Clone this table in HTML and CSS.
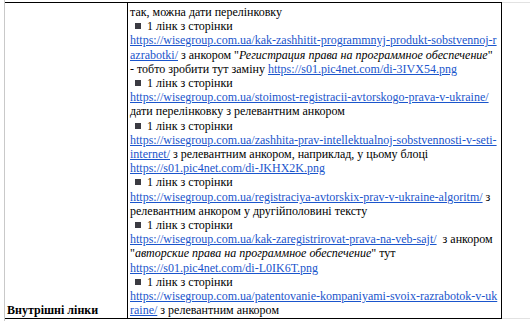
FILE: index.html
```html
<!DOCTYPE html>
<html lang="uk">
<head>
<meta charset="utf-8">
<link rel="stylesheet" href="styles.css">
</head>
<body>
<div class="page">
  <table class="doc-table">
    <tr>
      <td class="label-cell"><b>Внутрішні лінки</b></td>
      <td class="content-cell">так, можна дати перелінковку<br>
<span class="sq"></span>1 лінк з сторінки<br>
<a href="#">https://wisegroup.com.ua/kak-zashhitit-programmnyj-produkt-sobstvennoj-r</a><br>
<a href="#">azrabotki/</a> з анкором "<i>Регистрация права на программное обеспечение</i>"<br>
- тобто зробити тут заміну <a href="#">https://s01.pic4net.com/di-3IVX54.png</a><br>
<span class="sq"></span>1 лінк з сторінки<br>
<a href="#">https://wisegroup.com.ua/stoimost-registracii-avtorskogo-prava-v-ukraine/</a><br>
дати перелінковку з релевантним анкором<br>
<span class="sq"></span>1 лінк з сторінки<br>
<a href="#">https://wisegroup.com.ua/zashhita-prav-intellektualnoj-sobstvennosti-v-seti-</a><br>
<a href="#">internet/</a> з релевантним анкором, наприклад, у цьому блоці<br>
<a href="#">https://s01.pic4net.com/di-JKHX2K.png</a><br>
<span class="sq"></span>1 лінк з сторінки<br>
<a href="#">https://wisegroup.com.ua/registraciya-avtorskix-prav-v-ukraine-algoritm/</a> з<br>
релевантним анкором у другійполовині тексту<br>
<span class="sq"></span>1 лінк з сторінки<br>
<a href="#">https://wisegroup.com.ua/kak-zaregistrirovat-prava-na-veb-sajt/</a>&nbsp; з анкором<br>
"<i>авторские права на программное обеспечение</i>" тут<br>
<a href="#">https://s01.pic4net.com/di-L0IK6T.png</a><br>
<span class="sq"></span>1 лінк з сторінки<br>
<a href="#">https://wisegroup.com.ua/patentovanie-kompaniyami-svoix-razrabotok-v-uk</a><br>
<a href="#">raine/</a> з релевантним анкором</td>
      <td class="spare-cell"></td>
    </tr>
  </table>
</div>
</body>
</html>
```

FILE: styles.css
```css
html, body {
  margin: 0;
  padding: 0;
  background: #ffffff;
}

body {
  width: 530px;
  height: 321px;
  overflow: hidden;
  font-family: "Liberation Serif", "Times New Roman", serif;
  font-size: 12px;
  color: #000000;
}

.page {
  margin-left: 4px;
  height: 321px;
  border-left: 1px solid #c9c9c9;
  padding-top: 2px;
  box-sizing: border-box;
}

.doc-table {
  border-collapse: separate;
  border-spacing: 0;
  table-layout: fixed;
}

.doc-table td {
  padding: 0;
  line-height: 14.2px;
  border-top: 1px solid #000000;
  border-bottom: 1px solid #000000;
}

.label-cell {
  width: 120px;
  padding: 2px 0 1px 2px !important;
  border-right: 1px solid #000000;
  vertical-align: bottom;
  white-space: nowrap;
}

.label-cell b {
  font-weight: bold;
}

.content-cell {
  width: 371px;
  padding: 2px 0 1px 2px !important;
  border-right: 1px solid #000000;
  vertical-align: top;
  white-space: nowrap;
}

.spare-cell {
  width: 28px;
  border-top-color: #e2e2e2 !important;
  border-bottom-color: #e2e2e2 !important;
}

.content-cell a {
  color: #1a55cc;
  text-decoration: underline;
}

.content-cell i {
  font-style: italic;
}

.sq {
  display: inline-block;
  width: 6px;
  height: 6px;
  margin: 0 6px 0 5px;
  background: #3b3b42;
  vertical-align: 1px;
}
```
